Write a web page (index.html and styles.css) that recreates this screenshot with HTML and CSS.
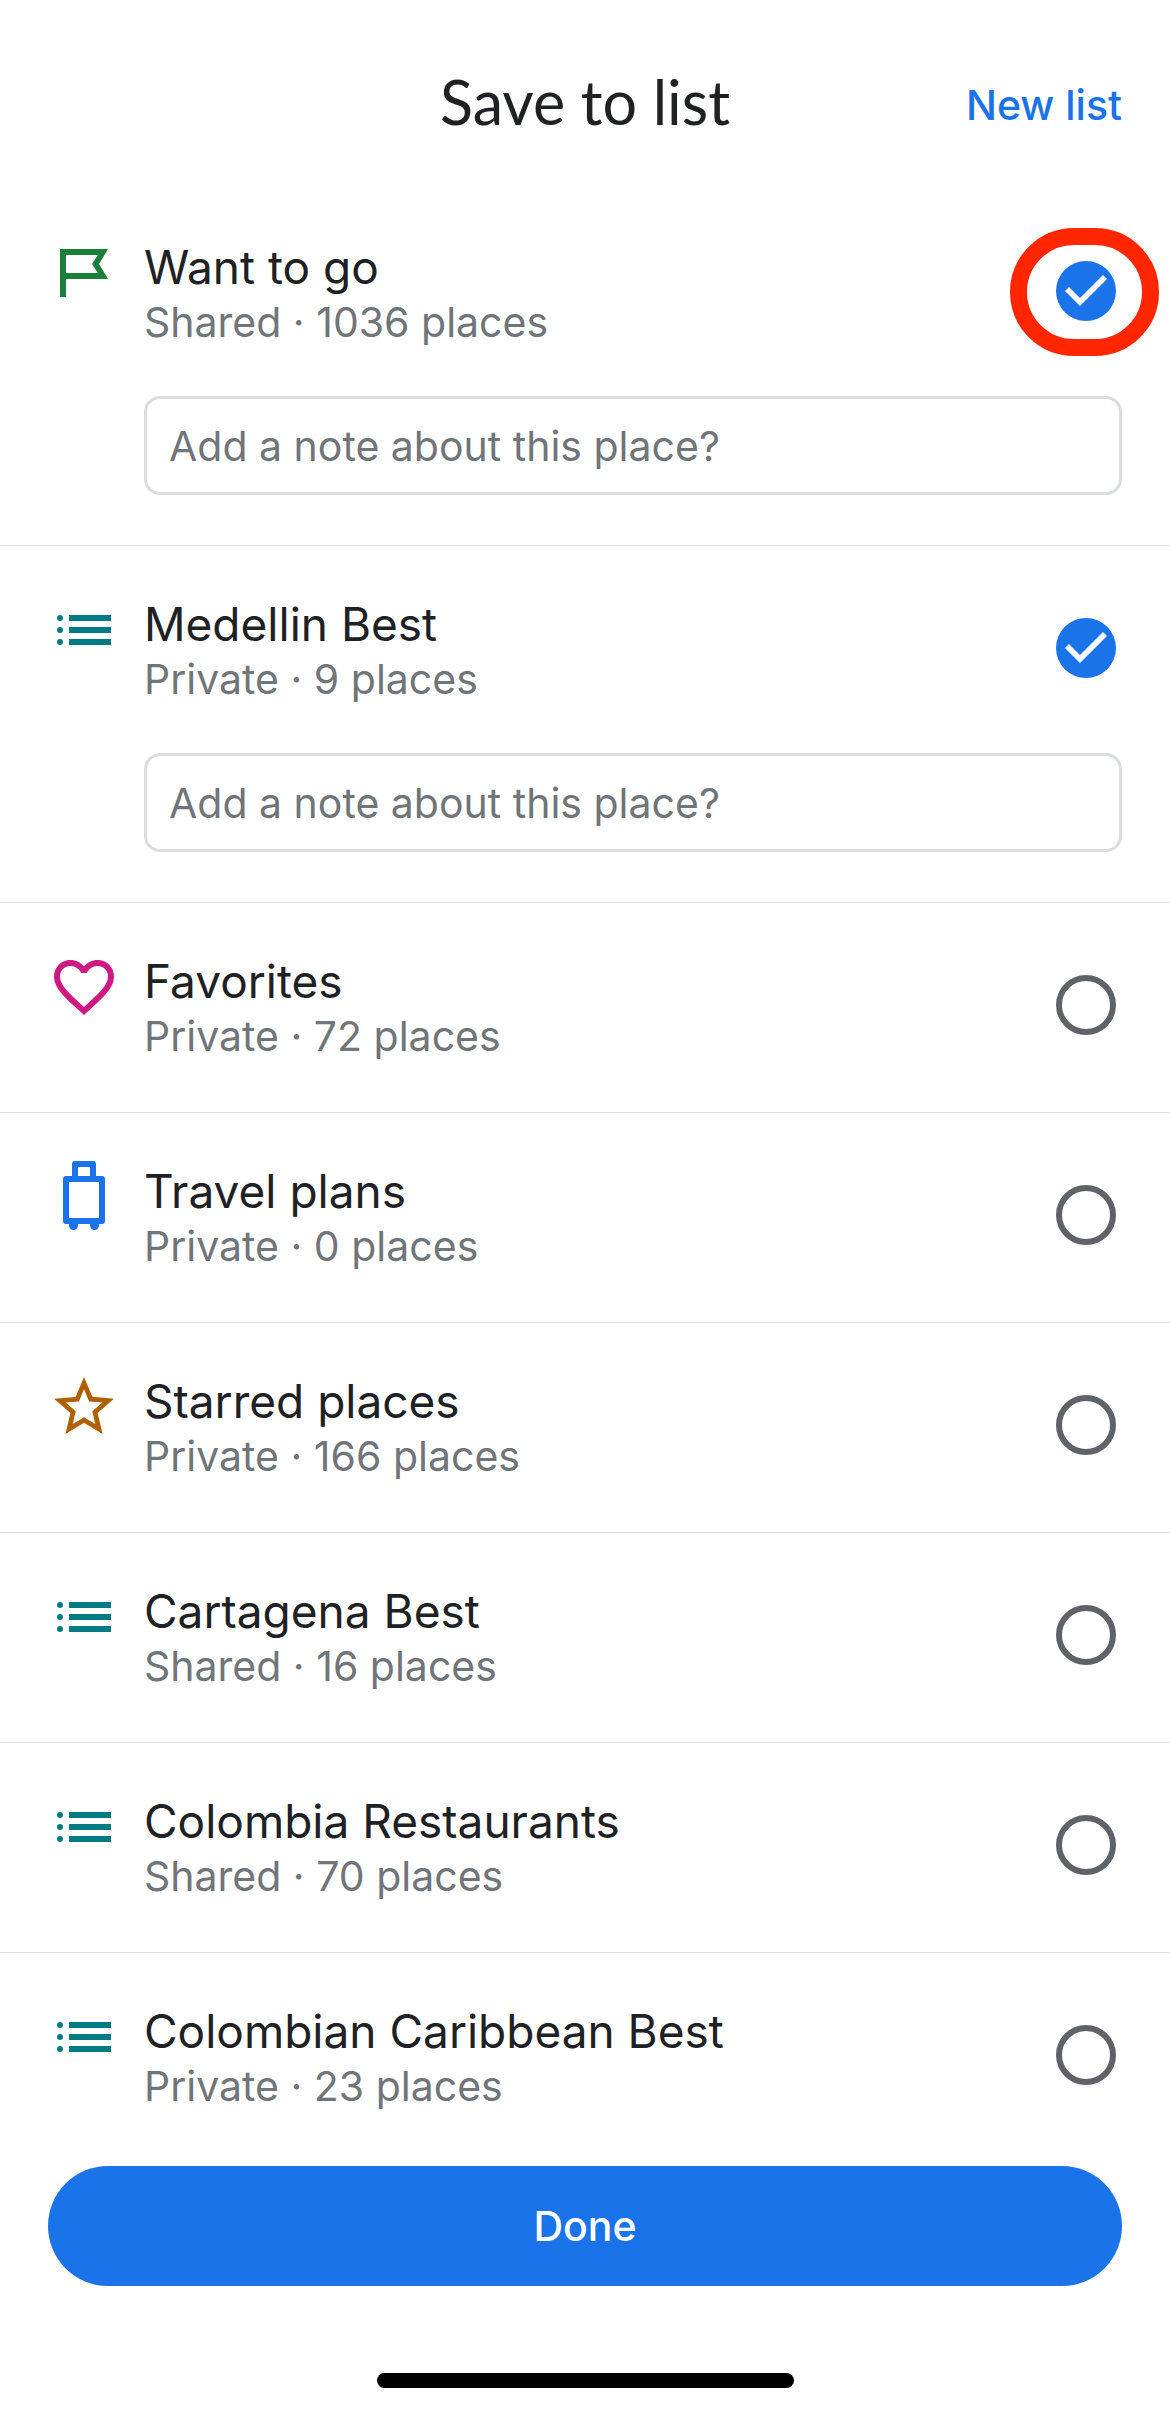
FILE: index.html
```html
<!DOCTYPE html>
<html lang="en">
<head>
    <meta charset="UTF-8">
    <meta name="viewport" content="width=device-width, initial-scale=1.0">
    <title>Save to list</title>
    <link rel="stylesheet" href="styles.css">
</head>
<body>
    <!-- Shared icon shapes -->
    <svg class="sprite" aria-hidden="true">
        <symbol id="icon-flag" viewBox="0 0 24 24">
            <path fill-rule="evenodd" d="M4 4H20L17 9L20 14H6V20H4ZM6 6V12H16.6L14.7 9L16.6 6Z"/>
        </symbol>
        <symbol id="icon-list" viewBox="0 0 24 24">
            <circle cx="4" cy="8" r="1"/>
            <circle cx="4" cy="12" r="1"/>
            <circle cx="4" cy="16" r="1"/>
            <path d="M7 7H21V9H7ZM7 11H21V13H7ZM7 15H21V17H7Z"/>
        </symbol>
        <symbol id="icon-heart" viewBox="0 0 24 24">
            <path d="M16.5 3c-1.74 0-3.41.81-4.5 2.09C10.91 3.81 9.24 3 7.5 3 4.42 3 2 5.42 2 8.5c0 3.78 3.4 6.86 8.55 11.54L12 21.35l1.45-1.32C18.6 15.36 22 12.28 22 8.5 22 5.42 19.58 3 16.5 3zm-4.4 15.55l-.1.1-.1-.1C7.14 14.24 4 11.39 4 8.5 4 6.5 5.5 5 7.5 5c1.54 0 3.04.99 3.57 2.36h1.87C13.46 5.99 14.96 5 16.5 5c2 0 3.5 1.5 3.5 3.5 0 2.89-3.14 5.74-7.9 10.05z"/>
        </symbol>
        <symbol id="icon-luggage" viewBox="0 0 24 24">
            <path fill-rule="evenodd" d="M9 0H15Q16 0 16 1V5H18Q19 5 19 6V20Q19 21 18 21H17V21.5A1.5 1.5 0 0 1 14 21.5V21H10V21.5A1.5 1.5 0 0 1 7 21.5V21H6Q5 21 5 20V6Q5 5 6 5H8V1Q8 0 9 0ZM10 2V5H14V2ZM7 7V19H17V7Z"/>
        </symbol>
        <symbol id="icon-star" viewBox="0 0 24 24">
            <path fill-rule="evenodd" d="M22 9.24l-7.19-.62L12 2 9.19 8.63 2 9.24l5.46 4.73L5.82 21 12 17.27 18.18 21l-1.63-7.03L22 9.24zM12 15.4l-3.76 2.27 1-4.28-3.32-2.88 4.38-.38L12 6.1l1.71 4.04 4.38.38-3.32 2.88 1 4.28L12 15.4z"/>
        </symbol>
    </svg>

    <header class="header">
        <h1>Save to list</h1>
        <button type="button" class="new-list">New list</button>
    </header>

    <form class="save-form">
        <ul class="lists">
            <li class="row has-note">
                <svg class="icon green"><use href="#icon-flag"/></svg>
                <label class="info" for="want">
                    <span class="name">Want to go</span>
                    <span class="meta">Shared · 1036 places</span>
                </label>
                <span class="pick highlight"><input type="checkbox" id="want" checked></span>
                <input type="text" class="note" aria-label="Note for Want to go" placeholder="Add a note about this place?">
            </li>
            <li class="row has-note">
                <svg class="icon teal"><use href="#icon-list"/></svg>
                <label class="info" for="medellin">
                    <span class="name">Medellin Best</span>
                    <span class="meta">Private · 9 places</span>
                </label>
                <span class="pick"><input type="checkbox" id="medellin" checked></span>
                <input type="text" class="note" aria-label="Note for Medellin Best" placeholder="Add a note about this place?">
            </li>
            <li class="row">
                <svg class="icon pink"><use href="#icon-heart"/></svg>
                <label class="info" for="favorites">
                    <span class="name">Favorites</span>
                    <span class="meta">Private · 72 places</span>
                </label>
                <span class="pick"><input type="checkbox" id="favorites"></span>
            </li>
            <li class="row">
                <svg class="icon blue"><use href="#icon-luggage"/></svg>
                <label class="info" for="travel">
                    <span class="name">Travel plans</span>
                    <span class="meta">Private · 0 places</span>
                </label>
                <span class="pick"><input type="checkbox" id="travel"></span>
            </li>
            <li class="row">
                <svg class="icon orange"><use href="#icon-star"/></svg>
                <label class="info" for="starred">
                    <span class="name">Starred places</span>
                    <span class="meta">Private · 166 places</span>
                </label>
                <span class="pick"><input type="checkbox" id="starred"></span>
            </li>
            <li class="row">
                <svg class="icon teal"><use href="#icon-list"/></svg>
                <label class="info" for="cartagena">
                    <span class="name">Cartagena Best</span>
                    <span class="meta">Shared · 16 places</span>
                </label>
                <span class="pick"><input type="checkbox" id="cartagena"></span>
            </li>
            <li class="row">
                <svg class="icon teal"><use href="#icon-list"/></svg>
                <label class="info" for="restaurants">
                    <span class="name">Colombia Restaurants</span>
                    <span class="meta">Shared · 70 places</span>
                </label>
                <span class="pick"><input type="checkbox" id="restaurants"></span>
            </li>
            <li class="row">
                <svg class="icon teal"><use href="#icon-list"/></svg>
                <label class="info" for="caribbean">
                    <span class="name">Colombian Caribbean Best</span>
                    <span class="meta">Private · 23 places</span>
                </label>
                <span class="pick"><input type="checkbox" id="caribbean"></span>
            </li>
        </ul>
        <div class="footer">
            <button type="button" class="done">Done</button>
            <div class="home-bar"></div>
        </div>
    </form>
</body>
</html>
```

FILE: styles.css
```css
*, *::before, *::after {
    box-sizing: border-box;
}
body {
    margin: 0;
    min-height: 100vh;
    display: flex;
    flex-direction: column;
    background: #fff;
    color: #202124;
    font-family: Inter, Roboto, sans-serif;
}
button, input {
    margin: 0;
    font-family: inherit;
}
button {
    border: none;
    cursor: pointer;
}
.sprite {
    display: none;
}

/* Header */
.header {
    display: grid;
    grid-template-columns: 1fr auto 1fr;
    align-items: end;
    padding: 66px 48px 51px;
}
.header h1 {
    grid-column: 2;
    margin: 0;
    font-family: Lato, sans-serif;
    font-size: 61px;
    font-weight: 400;
    line-height: 72px;
}
.new-list {
    justify-self: end;
    padding: 0;
    background: none;
    color: #1a73e8;
    font-size: 41px;
    font-weight: 500;
    line-height: 66px;
}

/* Lists */
.save-form {
    flex: 1;
    display: flex;
    flex-direction: column;
}
.lists {
    margin: 0;
    padding: 0;
    list-style: none;
}
.row {
    display: grid;
    grid-template-columns: 72px 1fr 72px;
    column-gap: 24px;
    padding: 48px 48px 50px;
    border-bottom: 1px solid #dadce0;
}
.row:last-child {
    border-bottom: none;
}
.icon {
    width: 72px;
    height: 72px;
    fill: currentColor;
}
.green { color: #188038; }
.teal { color: #007b83; }
.pink { color: #d01884; }
.blue { color: #1a73e8; }
.orange { color: #b06000; }

.info {
    display: flex;
    flex-direction: column;
}
.name {
    font-size: 46px;
    line-height: 60px;
}
.meta {
    color: #70757a;
    font-size: 41px;
    line-height: 51px;
}

/* Round checkbox */
.pick {
    position: relative;
    display: flex;
    align-items: center;
    justify-content: center;
    height: 108px;
}
.pick input {
    appearance: none;
    width: 60px;
    height: 60px;
    border: 6px solid #5f6368;
    border-radius: 50%;
    cursor: pointer;
}
.pick input:checked {
    border: none;
    background: #1a73e8;
}
.pick input:checked::before {
    content: "";
    display: block;
    width: 60px;
    height: 60px;
    background: #fff;
    clip-path: polygon(24px 45px, 9px 30px, 13px 26px, 24px 37px, 47px 14px, 51px 18px);
}
.highlight::after {
    content: "";
    position: absolute;
    top: -9px;
    left: -40px;
    width: 149px;
    height: 128px;
    border: 17px solid #ff2600;
    border-radius: 64px;
    pointer-events: none;
}

.note {
    grid-column: 2 / -1;
    width: 100%;
    height: 99px;
    margin-top: 48px;
    padding: 0 22px;
    border: 3px solid #dadce0;
    border-radius: 16px;
    background: #fff;
    color: #202124;
    font-size: 41px;
}
.note::placeholder {
    color: #70757a;
    opacity: 1;
}

/* Footer */
.footer {
    flex: 1;
    display: flex;
    flex-direction: column;
    align-items: center;
    justify-content: space-between;
    gap: 48px;
    padding: 4px 48px 24px;
}
.done {
    width: 100%;
    height: 120px;
    border-radius: 60px;
    background: #1a73e8;
    color: #fff;
    font-size: 41px;
    font-weight: 500;
}
.home-bar {
    width: 417px;
    height: 15px;
    border-radius: 8px;
    background: #000;
}
```
